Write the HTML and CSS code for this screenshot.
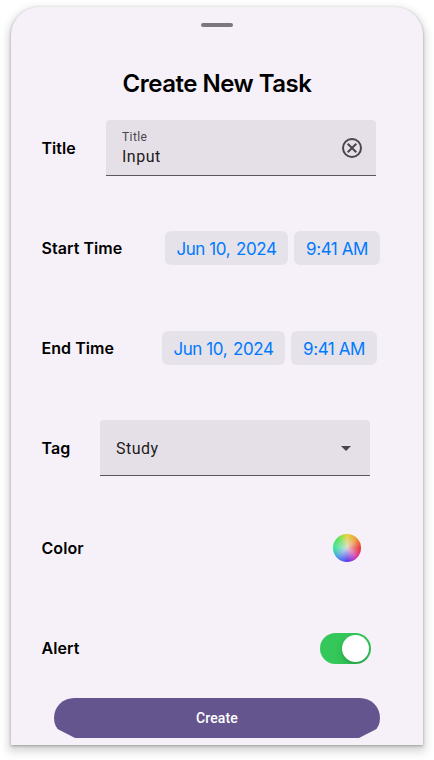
FILE: index.html
```html
<!DOCTYPE html>
<html lang="en">
<head>
<meta charset="utf-8">
<title>Create New Task</title>
<link rel="stylesheet" href="styles.css">
</head>
<body>
<main class="sheet">
  <div class="handle"></div>
  <h1 class="heading">Create New Task</h1>
  <form class="rows">
    <div class="row row-title">
      <span class="label">Title</span>
      <div class="field">
        <div class="field-text">
          <span class="field-label">Title</span>
          <span class="field-value">Input</span>
        </div>
        <svg class="icon-clear" width="24" height="24" viewBox="0 0 24 24" fill="#49454f"><path d="M8.4 17 12 13.4 15.6 17 17 15.6 13.4 12 17 8.4 15.6 7 12 10.6 8.4 7 7 8.4 10.6 12 7 15.6ZM12 22a10 10 0 1 1 0-20 10 10 0 0 1 0 20Zm0-2a8 8 0 1 0 0-16 8 8 0 0 0 0 16Z"/></svg>
      </div>
    </div>
    <div class="row row-start">
      <span class="label">Start Time</span>
      <div class="chips">
        <span class="chip chip-date"><span>Jun 10,</span><span>2024</span></span>
        <span class="chip chip-time">9:41 AM</span>
      </div>
    </div>
    <div class="row row-end">
      <span class="label">End Time</span>
      <div class="chips">
        <span class="chip chip-date"><span>Jun 10,</span><span>2024</span></span>
        <span class="chip chip-time">9:41 AM</span>
      </div>
    </div>
    <div class="row row-tag">
      <span class="label">Tag</span>
      <div class="field">
        <span class="field-value">Study</span>
        <svg class="icon-drop" width="24" height="24" viewBox="0 0 24 24" fill="#49454f"><path d="M7 10l5 5 5-5z"/></svg>
      </div>
    </div>
    <div class="row row-color">
      <span class="label">Color</span>
      <span class="wheel"></span>
    </div>
    <div class="row row-alert">
      <span class="label">Alert</span>
      <span class="switch"><span class="knob"></span></span>
    </div>
  </form>
  <button class="create" type="button">Create</button>
</main>
</body>
</html>
```
FILE: styles.css
```css
* { box-sizing: border-box; }
body {
  margin: 0;
  height: 760px;
  overflow: hidden;
  background: #fff;
  font-family: Inter, "Liberation Sans", sans-serif;
  color: #000;
}
.sheet {
  display: flex;
  flex-direction: column;
  width: 412px;
  height: 738px;
  margin: 7px 0 0 11px;
  padding-top: 16px;
  border-radius: 28px 28px 0 0;
  background: #f6f1f9;
  box-shadow: 0 1px 3px rgba(0, 0, 0, .3), 0 4px 8px 3px rgba(0, 0, 0, .15);
}
.handle {
  width: 32px;
  height: 4px;
  margin-left: 190px;
  border-radius: 2px;
  background: #7d767f;
}
.heading {
  margin: 42px 0 0;
  font-size: 24px;
  line-height: 30px;
  font-weight: 600;
  letter-spacing: -.5px;
  text-align: center;
}
.rows {
  display: flex;
  flex-direction: column;
  gap: 44px;
  margin-top: 21px;
  padding-left: 30.5px;
}
.row {
  display: flex;
  align-items: center;
  justify-content: space-between;
  height: 56px;
}
.row-title { padding-right: 47px; }
.row-start { padding-right: 43px; }
.row-end { padding-right: 46px; }
.row-tag { padding-right: 53px; }
.row-color { padding-right: 62px; }
.row-alert { padding-right: 52px; }
.label {
  font-size: 16px;
  line-height: 20px;
  font-weight: 600;
  letter-spacing: .06px;
}
.field {
  display: flex;
  align-items: center;
  justify-content: space-between;
  width: 270px;
  height: 56px;
  padding: 1px 12px 0 16px;
  border-bottom: 1px solid #5b5660;
  border-radius: 4px 4px 0 0;
  background: #e5e0e7;
  font-family: Roboto, sans-serif;
}
.field-text { display: flex; flex-direction: column; padding-top: 1px; }
.field-label {
  font-size: 12px;
  line-height: 16px;
  letter-spacing: .4px;
  color: #49454f;
}
.field-value {
  font-size: 16px;
  line-height: 24px;
  letter-spacing: .5px;
  color: #1d1b20;
}
.row-tag .field-value { padding-top: 1px; }
.chips { display: flex; gap: 6px; }
.chip {
  display: flex;
  align-items: center;
  justify-content: center;
  height: 34px;
  padding-top: 1px;
  border-radius: 6px;
  background: #e5e2e9;
  color: #007aff;
  font-size: 17px;
  line-height: 22px;
  letter-spacing: -.43px;
  white-space: nowrap;
}
.chip-date { width: 123px; gap: 6px; }
.chip-time { width: 86px; }
.wheel {
  width: 28px;
  height: 28px;
  border-radius: 50%;
  background:
    radial-gradient(circle, rgba(225, 225, 225, .9) 0, rgba(225, 225, 225, 0) 66%),
    conic-gradient(#e6d43a, #f09a35 45deg, #ee3232 90deg, #d63bb0 135deg, #5a3df0 180deg, #4b9bee 225deg, #35e69a 270deg, #58e65a 315deg, #e6d43a);
}
.switch {
  display: flex;
  align-items: center;
  justify-content: flex-end;
  width: 51px;
  height: 31px;
  padding: 2px;
  border-radius: 16px;
  background: #34c759;
  overflow: hidden;
}
.knob {
  width: 27px;
  height: 27px;
  border-radius: 50%;
  background: #fff;
  box-shadow: 0 3px 8px rgba(0, 0, 0, .15), 0 3px 1px rgba(0, 0, 0, .06);
}
.create {
  width: 326px;
  height: 40px;
  margin: 22px 0 0 43px;
  padding: 0;
  border: 0;
  border-radius: 20px;
  background: #65558f;
  clip-path: polygon(0 0, 100% 0, 100% 26px, 322.5px 31px, 305px 100%, 21px 100%, 3.5px 31px, 0 26px);
  color: #fff;
  font: 500 14px/20px Roboto, sans-serif;
  letter-spacing: .1px;
}
```
